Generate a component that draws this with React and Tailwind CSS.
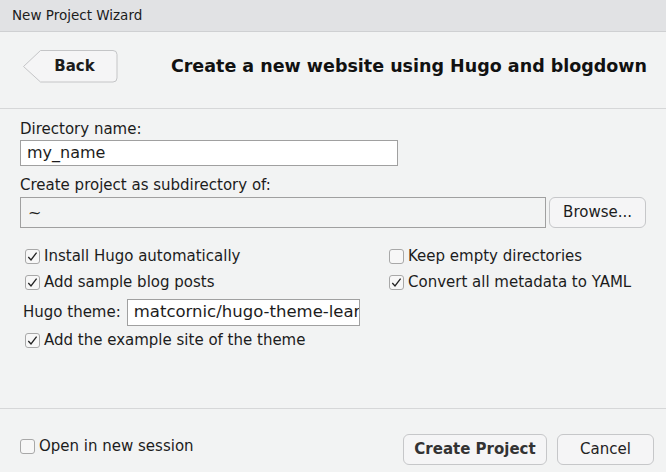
import React from 'react';

const font = { fontFamily: '"DejaVu Sans", sans-serif' };

function Check({ checked }) {
  return (
    <span className="flex h-[15px] w-[15px] shrink-0 items-center justify-center rounded-[3px] border border-[#a8a8a8] bg-[#f7f7f7]">
      {checked && (
        <svg width="13" height="13" viewBox="0 0 13 13">
          <path d="M2.3 7 L5 9.9 L10.6 2.6" fill="none" stroke="#222" strokeWidth="1.3" />
        </svg>
      )}
    </span>
  );
}

function CheckRow({ checked, label }) {
  return (
    <label className="flex items-center gap-[4px] text-[15px] text-[#1c1c1c]">
      <Check checked={checked} />
      <span>{label}</span>
    </label>
  );
}

export default function App() {
  return (
    <div className="flex h-[472px] w-[666px] flex-col bg-[#f2f3f3]" style={font}>
      <div className="flex h-[32px] shrink-0 items-center border-b border-[#cfd0d2] bg-[#e1e2e4] pl-[12px] text-[13.5px] text-[#1c1c1c]">
        New Project Wizard
      </div>

      <div className="flex h-[77px] shrink-0 items-center border-b border-[#d6d7d8] pb-[7px] pl-[23px] pr-[19px]">
        <button className="relative flex h-[33px] w-[95px] items-center justify-center pl-[8px] text-[15px] font-bold text-[#1c1c1c]">
          <svg className="absolute inset-0" width="95" height="33" viewBox="0 0 95 33">
            <path d="M17.5 0.5 H90 a4 4 0 0 1 4 4 V28 a4 4 0 0 1 -4 4 H17.5 L0.5 16.5 Z" fill="#f5f5f6" stroke="#c4c5c7" />
          </svg>
          <span className="relative">Back</span>
        </button>
        <div className="ml-auto text-[17.5px] font-bold text-[#111]">Create a new website using Hugo and blogdown</div>
      </div>

      <div className="flex flex-1 flex-col px-[20px] pt-[9px] text-[15px] text-[#1c1c1c]">
        <div className="leading-[22px]">Directory name:</div>
        <div className="flex h-[26px] w-[378px] items-center border border-[#a0a0a0] bg-white pl-[6px] text-[16px]">my_name</div>
        <div className="mt-[8px] leading-[22px]">Create project as subdirectory of:</div>
        <div className="mt-[1px] flex items-center gap-[3px]">
          <div className="flex h-[31px] w-[527px] items-center border border-[#a0a0a0] bg-[#f2f3f3] pl-[7px] text-[16px]">~</div>
          <button className="h-[31px] w-[97px] rounded-[6px] border border-[#c6c7c9] bg-[#f5f5f6] text-[15px] text-[#1c1c1c]">Browse...</button>
        </div>

        <div className="mt-[15px] grid grid-cols-[369px_1fr]">
          <div className="flex flex-col pl-[5px]">
            <div className="flex h-[26px] items-center"><CheckRow checked label="Install Hugo automatically" /></div>
            <div className="flex h-[26px] items-center"><CheckRow checked label="Add sample blog posts" /></div>
            <div className="mt-[4px] flex h-[27px] items-center -ml-[2px]">
              <span>Hugo theme:</span>
              <div className="ml-[6px] flex h-[27px] w-[233px] items-center overflow-hidden whitespace-nowrap border border-[#a0a0a0] bg-white pl-[6px] text-[16.5px]">matcornic/hugo-theme-learn</div>
            </div>
            <div className="mt-[1px] flex h-[26px] items-center"><CheckRow checked label="Add the example site of the theme" /></div>
          </div>
          <div className="flex flex-col">
            <div className="flex h-[26px] items-center"><CheckRow label="Keep empty directories" /></div>
            <div className="flex h-[26px] items-center"><CheckRow checked label="Convert all metadata to YAML" /></div>
          </div>
        </div>
      </div>

      <div className="flex h-[64px] shrink-0 items-start border-t border-[#d6d7d8] pl-[20px] pr-[12px] pt-[25px]">
        <div className="mt-[1px] flex h-[22px] items-center"><CheckRow label="Open in new session" /></div>
        <div className="ml-auto flex gap-[10px]">
          <button className="h-[31px] w-[144px] rounded-[6px] border border-[#c6c7c9] bg-[#f5f5f6] text-[15px] font-bold text-[#333]">Create Project</button>
          <button className="h-[31px] w-[97px] rounded-[6px] border border-[#c6c7c9] bg-[#f5f5f6] text-[15px] text-[#222]">Cancel</button>
        </div>
      </div>
    </div>
  );
}
